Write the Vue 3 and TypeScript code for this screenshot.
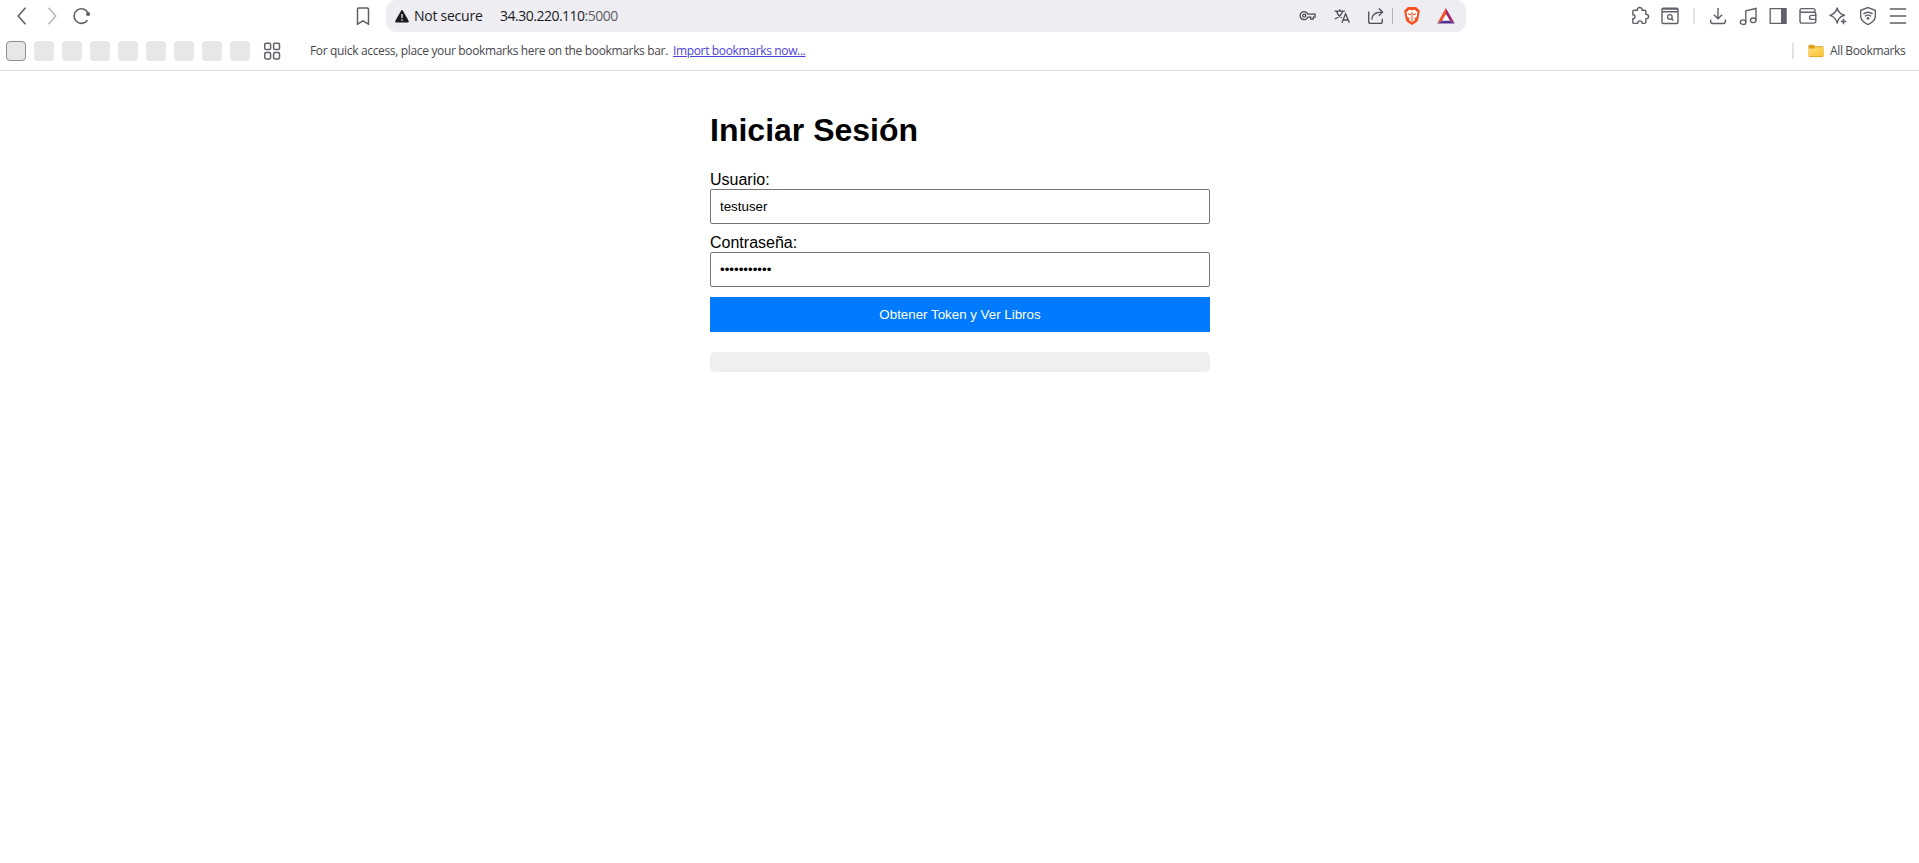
<script setup lang="ts">
import { ref } from 'vue'

const username = ref<string>('testuser')
const password = ref<string>('password123')
const tabTiles: number[] = [0, 1, 2, 3, 4, 5, 6, 7, 8]
</script>

<template>
  <div class="window">
    <header class="chrome">
      <div class="toolbar">
        <nav class="nav">
          <svg class="icon" viewBox="0 0 20 20"><path d="M13.5 1.7 6.2 10l7.3 8.3" stroke-width="1.6" /></svg>
          <svg class="icon disabled" viewBox="0 0 20 20"><path d="m6.5 1.7 7.3 8.3-7.3 8.3" stroke-width="1.6" /></svg>
          <svg class="icon" viewBox="0 0 20 20">
            <path d="M15.4 14.2A7.3 7.3 0 1 1 16 7" stroke-width="1.6" />
            <circle cx="16.1" cy="8" r="2.1" class="solid" />
          </svg>
        </nav>
        <svg class="icon bookmark" viewBox="0 0 20 20"><path d="M5.8 1.9h8.4q1.3 0 1.3 1.3v15L10 14.8l-5.5 3.4v-15q0-1.3 1.3-1.3z" /></svg>
        <div class="address">
          <svg class="warning" viewBox="0 0 14 13">
            <path d="M6.2.6q.8-1 1.6 0l5.8 10.2q.5 1.4-.8 1.700H1.200Q-.1 12.200.4 10.800z" fill="#1d1b22" />
            <path d="M7 4v4M7 9.300v1.500" stroke="#dcdbe1" stroke-width="1.400" />
          </svg>
          <span class="security">Not secure</span>
          <span class="url">34.30.220.110<span class="port">:5000</span></span>
          <div class="address-actions">
            <svg class="icon" viewBox="0 0 20 20">
              <path d="M9.800 8.200h7.200v3h-1.700v2h-2.600v-2H9.800a4 4 0 1 1 0-3z" stroke-width="1.300" />
              <circle cx="6.200" cy="9.700" r="1.500" stroke-width="1.300" />
            </svg>
            <svg class="icon" viewBox="0 0 20 20">
              <path d="M2.600 5.200h10.200M7.700 3.300v1.900M4.600 5.200c1 3.300 3.300 5.500 5.400 6.500M10.700 5.200C9.800 8.600 6.500 11.600 2.800 13M9.900 16.800l3.700-9 3.700 9M11.200 14h4.800" stroke-width="1.300" />
            </svg>
            <svg class="icon" viewBox="0 0 20 20">
              <path d="M2.700 5.500v9.900q0 2 2 2h9.600q2 0 2-2v-2.600M6 13.500c0-5 3.200-7.400 10.200-7.400M12.900 2.500l3.700 3.600-3.700 3.700" stroke-width="1.300" />
            </svg>
          </div>
          <i class="address-divider"></i>
          <div class="brand-actions">
            <svg class="icon brand" viewBox="0 0 20 20">
              <path d="m5.500 1.200 2-.2h5l2 .2 1.300 1.500 1 .5 1.100 2.400-.4 1.500-1.400 6.700q-.4 1.500-1.600 2.400L10 19l-4.500-2.800q-1.200-.9-1.600-2.400L2.500 7.100l-.4-1.500 1.100-2.400 1-.5z" fill="#fb5020" />
              <path d="m7 3.700 3 .6 3-.6 2.600 2.700-.7 2.200.2 1.700-2.500 2 .4 1.800L10 16.300l-3-2.200.4-1.800-2.500-2 .2-1.700-.7-2.200z" fill="#fff" />
              <path d="m6.200 7.200 2.800.8-.4 1.300-2.200-.5zm7.600 0L11 8l.4 1.300 2.200-.5zM9.500 6h1v5h-1zM8.300 11l1.700.8 1.700-.8-.8 1.500H9.100zM8.500 14l1.500-.8 1.500.8-1.500 1z" fill="#fb5020" />
            </svg>
            <svg class="icon brand" viewBox="0 0 20 20">
              <path d="M9.800 2 1.200 17.500l5.100-3 3.700-6.300z" fill="#f4512c" />
              <path d="m9.800 2 9 15.500-5.100-3L10 8.200z" fill="#a3286f" />
              <path d="M1.200 17.500h17.600l-5.100-3.100H6.300z" fill="#5b3094" />
              <path d="m10 8.200 3.700 6.200H6.300z" fill="#fff" />
            </svg>
          </div>
        </div>
        <div class="extensions">
          <svg class="icon" viewBox="0 0 20 20">
            <path d="M4 4.200h3.300c-.1-1.600.8-2.700 2.400-2.700s2.600 1.100 2.400 2.700h2.600q1.200 0 1.200 1.200v2.800c1.700 0 2.700.8 2.700 2.300s-1 2.300-2.700 2.300v3.300q0 1.300-1.200 1.300h-2.500c.1-1.700-.8-2.500-2.300-2.500s-2.300.8-2.200 2.500H4q-1.200 0-1.200-1.200v-3.500c1.400.1 2.300-.6 2.300-2s-.9-2.100-2.300-2V5.400Q2.800 4.200 4 4.200z" stroke-width="1.400" />
          </svg>
          <svg class="icon" viewBox="0 0 20 20">
            <path d="M2 3.500q0-1.300 1.300-1.300h13.400Q18 2.200 18 3.500v12.800q0 1.200-1.300 1.200H3.300Q2 17.500 2 16.300zM2 5.700h16" stroke-width="1.400" />
            <path d="M2 3h16" stroke-width="1.500" />
            <circle cx="9.900" cy="11" r="2.300" stroke-width="1.300" /><path d="m11.600 12.700 1.700 1.800" stroke-width="1.500" />
          </svg>
        </div>
        <i class="toolbar-divider"></i>
        <div class="tools">
          <svg class="icon" viewBox="0 0 20 20"><path d="M10 2v10.500M5.900 8.800l4.100 4 4.100-4M2.600 13.600v1.600q0 2.300 2.200 2.300h10.400q2.200 0 2.200-2.300v-1.600" stroke-width="1.400" /></svg>
          <svg class="icon" viewBox="0 0 20 20">
            <path d="M7.800 16V4.800L18 2.500v11.300" stroke-width="1.400" />
            <ellipse cx="5.100" cy="16.200" rx="2.800" ry="2.300" stroke-width="1.400" /><ellipse cx="15.200" cy="14.300" rx="2.800" ry="2.300" stroke-width="1.400" />
          </svg>
          <svg class="icon" viewBox="0 0 20 20"><path d="M2.200 2.600h15.600v14.800H2.200z" stroke-width="1.300" /><path d="M13 2h5.500v16H13z" class="solid" /></svg>
          <svg class="icon" viewBox="0 0 20 20">
            <path d="M17 6.200V4.600q0-2-2-2H3.800Q2 2.600 2 4.400v10.500q0 2.200 2.200 2.200h11.600q2 0 2-2v-7q0-1.900-2-1.900H3.800Q2 6.200 2 4.400M17.800 9.400h-4q-2.300 0-2.300 2t2.300 2h4" stroke-width="1.400" />
          </svg>
          <svg class="icon" viewBox="0 0 20 20">
            <path d="M9.200 2q1.600 5.900 7.200 7.300-4 1-5.700 3.900-.8 1.500-1.500 3.900-1.600-6.200-7.200-7.800Q7.800 7.700 9.200 2z" stroke-width="1.400" stroke-linejoin="round" />
            <path d="M15.500 12.800v5.400M12.800 15.500h5.400" stroke-width="1.500" />
          </svg>
          <svg class="icon" viewBox="0 0 20 20">
            <path d="m10 1.600 7.300 2.700v6q0 5-7.300 8.300-7.300-3.300-7.300-8.300v-6z" stroke-width="1.400" />
            <path d="M5.400 8q4.600-3.600 9.200 0M7 10.400q3-2.500 6 0" stroke-width="1.400" /><circle cx="10" cy="12.400" r="1.400" class="solid" />
          </svg>
          <svg class="icon" viewBox="0 0 20 20"><path d="M1.800 3h16.400M1.800 10h16.400M1.800 17h16.400" stroke-width="1.600" /></svg>
        </div>
      </div>

      <div class="bookmarks">
        <div class="tiles">
          <i v-for="tile in tabTiles" :key="tile" class="tile" :class="{ selected: tile === 0 }"></i>
        </div>
        <svg class="icon grid-icon" viewBox="0 0 20 20">
          <rect x="2.700" y="2.200" width="5.900" height="6.400" rx="1.400" /><rect x="11.600" y="2.200" width="5.900" height="6.400" rx="1.400" />
          <rect x="2.700" y="11.500" width="5.900" height="6.400" rx="1.400" /><rect x="11.600" y="11.500" width="5.900" height="6.400" rx="1.400" />
        </svg>
        <span class="hint">For quick access, place your bookmarks here on the bookmarks bar.</span>
        <a class="import">Import bookmarks now...</a>
        <div class="all">
          <i class="bookmarks-divider"></i>
          <svg class="folder" viewBox="0 0 16 14">
            <defs>
              <linearGradient id="folder-fill" x1="0" y1="0" x2="1" y2="1"><stop offset="0" stop-color="#ffe07a" /><stop offset="1" stop-color="#fbc02f" /></linearGradient>
            </defs>
            <path d="M.5 2Q.5.8 1.700.8h3.600l1.700 1.500h7.300q1.200 0 1.200 1.200v8H.5z" fill="#dc9c17" />
            <path d="M.5 4.400h5L7 3.300h8.500v8.500q0 1.200-1.200 1.200H1.700Q.5 13 .5 11.800z" fill="url(#folder-fill)" />
            <path d="M.8 12.600h14.400" stroke="#d89a22" stroke-width=".8" />
          </svg>
          <span class="all-label">All Bookmarks</span>
        </div>
      </div>
    </header>

    <main class="page">
      <h1>Iniciar Sesión</h1>
      <form @submit.prevent>
        <label for="username">Usuario:</label>
        <input id="username" v-model="username" type="text" />
        <label for="password">Contraseña:</label>
        <input id="password" v-model="password" type="password" />
        <button type="submit">Obtener Token y Ver Libros</button>
      </form>
      <div class="result"></div>
    </main>
  </div>
</template>

<style>
body {
  margin: 0;
  background: #fff;
}
</style>

<style scoped>
.window {
  min-height: 863px;
  background: #fff;
  font-family: "Liberation Sans", Arial, sans-serif;
}
.chrome {
  box-sizing: border-box;
  height: 71px;
  border-bottom: 1px solid #dfdfe1;
  font-family: "Open Sans", "Noto Sans", sans-serif;
}
.toolbar {
  display: flex;
  align-items: center;
  height: 32px;
}
.icon {
  flex: none;
  width: 20px;
  height: 20px;
  fill: none;
  stroke: #5f6068;
  stroke-width: 1.5;
}
.icon .solid {
  fill: #5f6068;
  stroke: none;
}
.disabled {
  stroke: #b9b9be;
}
.icon.brand {
  stroke: none;
}
.nav {
  display: flex;
  gap: 10px;
  padding-left: 12px;
}
.bookmark {
  margin-left: 261px;
}
.address {
  display: flex;
  align-items: center;
  box-sizing: border-box;
  width: 1080px;
  height: 32px;
  margin-left: 13px;
  padding-left: 9px;
  border-radius: 10px;
  background: #ededf2;
  color: #1d1b22;
  font-size: 14px;
  line-height: 20px;
  white-space: nowrap;
}
.warning {
  width: 14px;
  height: 13px;
  fill: none;
}
.security {
  width: 86px;
  margin-left: 5px;
  letter-spacing: -0.25px;
}
.url {
  letter-spacing: -0.5px;
}
.port {
  color: #5f6068;
}
.address-actions {
  display: flex;
  gap: 14px;
  margin-left: auto;
}
.address-actions .icon {
  stroke: #4e4d57;
}
.address-divider {
  width: 1px;
  height: 16px;
  margin: 0 9px 0 6px;
  background: #b3b2bb;
}
.brand-actions {
  display: flex;
  gap: 14px;
  margin-right: 10px;
}
.extensions,
.tools {
  display: flex;
  gap: 10px;
}
.extensions {
  margin-left: auto;
}
.toolbar-divider {
  width: 2px;
  height: 16px;
  margin: 0 13px;
  background: #e1e1e6;
}
.tools {
  margin-right: 11px;
}
.bookmarks {
  display: flex;
  align-items: center;
  height: 38px;
  color: #47474e;
  font-size: 12px;
  line-height: 18px;
  white-space: nowrap;
}
.tiles {
  display: flex;
  gap: 8px;
  padding-left: 6px;
}
.tile {
  box-sizing: border-box;
  width: 20px;
  height: 20px;
  border-radius: 4px;
  background: #e6e8e7;
}
.selected {
  border: 1px solid #8b8d8f;
}
.grid-icon {
  margin-left: 12px;
}
.hint {
  width: 363px;
  margin-left: 28px;
  letter-spacing: -0.34px;
}
.import {
  color: #4c43dc;
  letter-spacing: -0.35px;
  text-decoration: underline;
}
.all {
  display: flex;
  align-items: center;
  margin-left: auto;
}
.bookmarks-divider {
  width: 2px;
  height: 16px;
  margin-right: 14px;
  background: #e1e1e6;
}
.folder {
  width: 16px;
  height: 14px;
}
.all-label {
  width: 76px;
  margin: 0 13px 0 6px;
  letter-spacing: -0.36px;
}
.page {
  width: 500px;
  margin: 41px 0 0 710px;
  color: #000;
}
h1 {
  margin: 0 0 21px;
  font-size: 32px;
  line-height: 37px;
}
label {
  display: block;
  font-size: 16px;
  line-height: 19px;
}
input {
  display: block;
  box-sizing: border-box;
  width: 100%;
  height: 35px;
  margin: 0 0 10px;
  padding: 7px 9px 8px;
  border: 1px solid #767676;
  border-radius: 2px;
  background: #fff;
  color: #000;
  font: 13.333px "Liberation Sans", Arial, sans-serif;
}
#username {
  margin-bottom: 9px;
}
button {
  display: block;
  width: 100%;
  height: 35px;
  padding: 0;
  border: 0;
  background: #007bff;
  color: #fff;
  font: 13.333px "Liberation Sans", Arial, sans-serif;
}
.result {
  height: 20px;
  margin-top: 20px;
  border-radius: 5px;
  background: #efefef;
}
</style>
